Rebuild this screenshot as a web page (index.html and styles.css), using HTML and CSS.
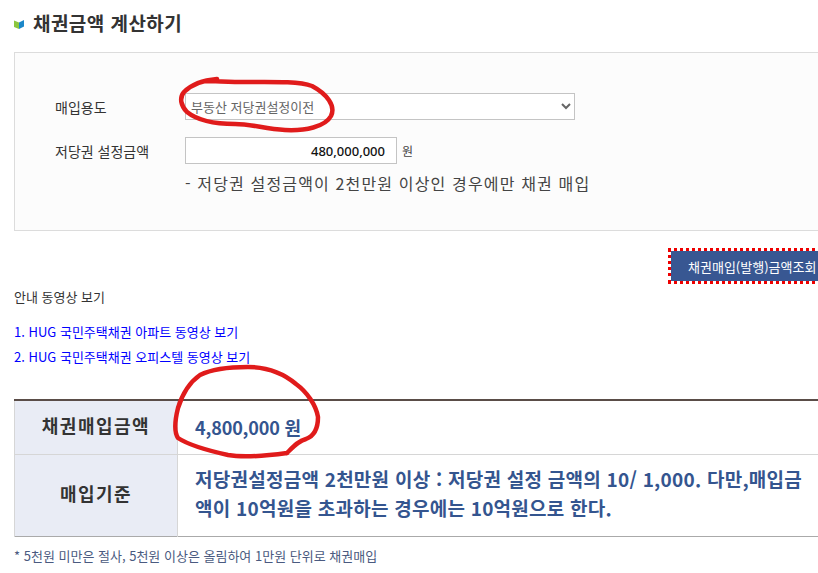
FILE: index.html
```html
<!DOCTYPE html>
<html lang="ko">
<head>
<meta charset="utf-8">
<title>채권금액 계산하기</title>
<link rel="stylesheet" href="styles.css">
</head>
<body>
<main class="page">
  <h2 class="title">
    <svg class="title-icon" viewBox="0 0 10 9" width="10" height="9"><path d="M0 0.5 L5 2.5 V9 L0 7 Z" fill="#8cc63f"/><path d="M5 2.5 L10 0 V6.5 L5 9 Z" fill="#1b87c9"/></svg>
    채권금액 계산하기
  </h2>
  <section class="calc">
    <div class="row">
      <label class="label">매입용도</label>
      <select class="select"><option>부동산 저당권설정이전</option></select>
    </div>
    <div class="row">
      <label class="label">저당권 설정금액</label>
      <input class="amount" type="text" value="480,000,000">
      <span class="unit">원</span>
    </div>
    <p class="hint">- 저당권 설정금액이 2천만원 이상인 경우에만 채권 매입</p>
  </section>
  <div class="actions"><button class="query" type="button">채권매입(발행)금액조회</button></div>
  <p class="guide">안내 동영상 보기</p>
  <ul class="links">
    <li><a href="#">1. HUG 국민주택채권 아파트 동영상 보기</a></li>
    <li><a href="#">2. HUG 국민주택채권 오피스텔 동영상 보기</a></li>
  </ul>
  <table class="result">
    <tr class="r1"><th>채권매입금액</th><td>4,800,000 원</td></tr>
    <tr class="r2"><th>매입기준</th><td>저당권설정금액 2천만원 이상 : 저당권 설정 금액의 10/ 1,000. 다만,매입금액이 10억원을 초과하는 경우에는 10억원으로 한다.</td></tr>
  </table>
  <p class="note">* 5천원 미만은 절사, 5천원 이상은 올림하여 1만원 단위로 채권매입</p>
</main>
<svg class="ink" viewBox="0 0 818 573" width="818" height="573">
  <path d="M217 79 C205 80 192 84 184 92 C179 98 181 106 187 112 C197 120 215 124 235 124 C252 124 265 129 285 130 C305 131 325 127 331 116 C336 106 327 94 312 86 C298 81 270 82 245 82 C230 82 215 81 205 81"/>
  <path d="M287 453 C293 447 298 441 306 439 C314 436 318 428 318 417 C316 405 307 392 296 384 C283 373 266 367 248 367 C230 367 212 369 200 375 C190 382 182 395 178 408 C175 420 174 432 178 438 C190 446 210 451 228 455 C245 458 265 456 287 453"/>
</svg>
</body>
</html>
```
FILE: styles.css
```css
html, body { margin: 0; padding: 0; width: 818px; height: 573px; overflow: hidden; background: #fff; }
body { font-family: "Noto Sans CJK KR", "Noto Sans", sans-serif; font-size: 12px; color: #333; position: relative; }
.page { width: 860px; padding: 11px 0 0 14px; box-sizing: border-box; }
.title { margin: 0; height: 24px; line-height: 24px; font-size: 19px; font-weight: 700; color: #333; letter-spacing: 0.45px; display: flex; align-items: center; gap: 9px; }
.title-icon { flex: none; margin-top: 2px; }
.calc { margin-top: 17px; height: 179px; box-sizing: border-box; border: 1px solid #dcdcdc; background: #fcfcfc; padding: 40px 0 0 40px; }
.row { display: flex; align-items: center; height: 27px; margin-bottom: 17px; }
.label { width: 130px; font-size: 14px; color: #333; }
.select { width: 390px; height: 27px; box-sizing: border-box; border: 1px solid #c4c4c4; background: #fff; font: 13px "Noto Sans CJK KR", sans-serif; color: #666; padding: 0 0 0 1px; }
.amount { width: 212px; height: 27px; box-sizing: border-box; border: 1px solid #c4c4c4; background: #fff; font: 500 13px "Noto Sans", "Noto Sans CJK KR", sans-serif; color: #111; text-align: right; padding: 0 11px 0 0; }
.unit { margin-left: 5px; font-size: 12px; color: #444; }
.hint { margin: -9px 0 0 130px; font-size: 16px; line-height: 22px; letter-spacing: 1.15px; color: #444; }
.actions { display: flex; justify-content: flex-start; padding: 20px 0 0 657px; }
.query { width: 200px; height: 30px; box-sizing: border-box; border: 0; outline: 3px dotted #e00; outline-offset: 0; background: #385792; color: #fff; font: 13px "Noto Sans CJK KR", sans-serif; text-align: left; padding: 0 0 0 17px; }
.guide { margin: 8px 0 0; font-size: 13px; line-height: 16px; color: #333; }
.links { list-style: none; margin: 14px 0 0; padding: 0; font-size: 13px; line-height: 25px; }
.links a { color: #00f; text-decoration: none; }
.result { margin-top: 30px; width: 840px; border-collapse: collapse; border-top: 2px solid #5a4d48; border-bottom: 1px solid #aaa; }
.result th { width: 163px; box-sizing: border-box; background: #e9ecf5; border-left: 1px solid #d6d6d6; border-right: 1px solid #d6d6d6; font-size: 18px; font-weight: 700; letter-spacing: 1.5px; color: #333; padding: 0 0 5px; }
.result td { box-sizing: border-box; padding: 0 17px; font-size: 18px; font-weight: 700; color: #34558f; line-height: 29px; letter-spacing: -0.15px; }
.r1 th, .r1 td { height: 54px; border-bottom: 1px solid #d6d6d6; }
.r2 th, .r2 td { height: 82px; }
.r2 td { padding: 0 50px 4px 17px; font-size: 19px; letter-spacing: 0.25px; }
.note { margin: 11px 0 0; font-size: 13px; line-height: 16px; color: #4a5a80; }
.ink { position: absolute; left: 0; top: 0; pointer-events: none; }
.ink path { fill: none; stroke: #e01b1b; stroke-width: 4.5; stroke-linecap: round; stroke-linejoin: round; }
```
